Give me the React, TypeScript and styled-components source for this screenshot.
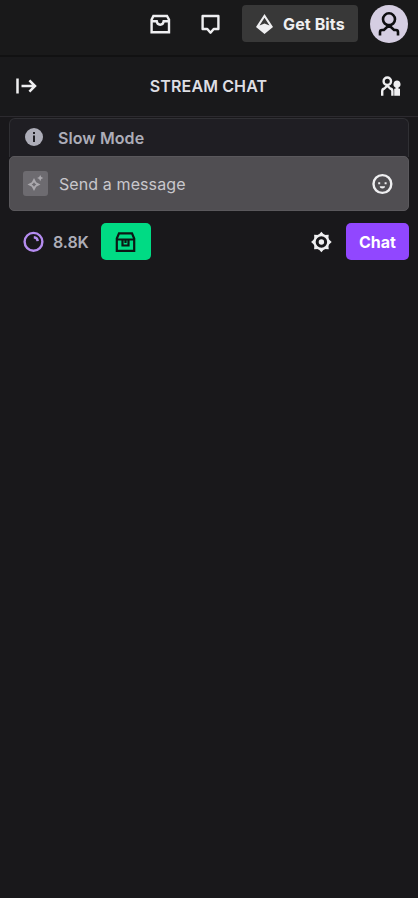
import React from "react";
import styled, { createGlobalStyle } from "styled-components";

const GlobalStyle = createGlobalStyle`
  * { box-sizing: border-box; }
  body { margin: 0; background: #19181b; }
  button { border: 0; padding: 0; margin: 0; font: inherit; color: inherit; background: none; cursor: pointer; }
  svg { display: block; flex: none; }
`;

const Page = styled.main`
  width: 100%;
  height: 898px;
  background: #19181b;
  color: #efeff1;
  font-family: Inter, "Liberation Sans", sans-serif;
  overflow: hidden;
`;

const TopBar = styled.header`
  display: flex;
  align-items: center;
  justify-content: flex-end;
  height: 57px;
  padding: 0 10px 8px 0;
  background: #19191a;
  border-bottom: 2px solid #111112;
`;

const IconButton = styled.button<{ $gap?: number }>`
  display: flex;
  align-items: center;
  justify-content: center;
  width: 22px;
  height: 22px;
  margin-right: ${(p) => p.$gap ?? 0}px;
`;

const BitsButton = styled.button`
  display: flex;
  align-items: center;
  gap: 9px;
  width: 116px;
  height: 37px;
  margin-right: 12px;
  padding-left: 13px;
  border-radius: 4px;
  background: #383838;
  font-size: 16px;
  font-weight: 700;
  letter-spacing: 0.12px;
  white-space: nowrap;
`;

const Avatar = styled.button`
  display: flex;
  width: 38px;
  height: 38px;
  border-radius: 50%;
  background: #d5cee2;
  color: #0e0e10;
`;

const ChatHeader = styled.header`
  display: flex;
  align-items: center;
  justify-content: space-between;
  height: 60px;
  padding: 0 16px 2px 15px;
  background: #19191b;
  border-bottom: 1px solid #2c2a2f;
`;

const Title = styled.h1`
  margin: 0;
  font-size: 16px;
  line-height: 20px;
  font-weight: 600;
  letter-spacing: 0.12px;
  color: #dedee3;
`;

const Composer = styled.section`
  height: 94px;
  margin: 0 9px;
  padding-top: 1px;
`;

const Notice = styled.div`
  display: flex;
  align-items: center;
  gap: 15px;
  height: 39px;
  padding: 0 0 2px 15px;
  border: 1px solid #303034;
  border-bottom: 0;
  border-radius: 6px 6px 0 0;
  background: #1f1e23;
`;

const NoticeLabel = styled.span`
  padding-top: 2px;
  color: #adadb8;
  font-size: 16px;
  font-weight: 600;
  letter-spacing: 0.08px;
`;

const MessageField = styled.div`
  display: flex;
  align-items: center;
  height: 55px;
  margin-top: -1px;
  padding: 0 15px 0 13px;
  border: 1px solid #5a585c;
  border-radius: 5px;
  background: #504e52;
  color: #c8c7cc;
  font-size: 16px;
  letter-spacing: 0.1px;
`;

const SparkleBadge = styled.span`
  display: flex;
  align-items: center;
  justify-content: center;
  width: 25px;
  height: 25px;
  margin-right: 11px;
  border-radius: 3px;
  background: #6d6b70;
  color: #aaa8ad;
`;

const Placeholder = styled.span`
  flex: 1;
`;

const EmoteButton = styled(IconButton)`
  color: #efeff1;
`;

const Footer = styled.footer`
  display: flex;
  align-items: center;
  height: 37px;
  margin: 12px 9px 0 23px;
`;

const Points = styled.span`
  width: 48px;
  margin-left: 9px;
  color: #adadb8;
  font-size: 16px;
  font-weight: 600;
  letter-spacing: -0.1px;
`;

const ClaimButton = styled.button`
  display: flex;
  align-items: center;
  justify-content: center;
  width: 50px;
  height: 37px;
  border-radius: 5px;
  background: #00db84;
  color: #0c1714;
`;

const Spacer = styled.div`
  flex: 1;
`;

const SendButton = styled.button`
  width: 63px;
  height: 37px;
  border-radius: 5px;
  background: #9147ff;
  color: #fff;
  font-size: 16px;
  font-weight: 700;
`;

const line = { fill: "none", stroke: "currentColor", strokeWidth: 2.4 } as const;

const InboxIcon = () => (
  <svg width="22" height="22" viewBox="0 0 22 22" {...line}>
    <path d="M2.600 6.600 4.400 3h13.600l2 3.600v12.600H2.600ZM2.600 8.200h5.100c.2 2.100 1.700 3.500 3.500 3.500s3.300-1.400 3.500-3.500h5.100" />
  </svg>
);

const WhisperIcon = () => (
  <svg width="22" height="22" viewBox="0 0 22 22" {...line}>
    <path strokeLinejoin="round" d="M3.600 3h15.800v13h-4.700L11.500 19.700 8.300 16H3.600Z" />
  </svg>
);

const BitsIcon = () => (
  <svg width="19" height="22" viewBox="0 0 19 22" fill="currentColor">
    <path fillRule="evenodd" d="M9.500 1 18 14l-8.500 7L1 14ZM9.500 4.800 4.500 12.600 9.500 10.400l5 2.200Z" />
  </svg>
);

const PersonIcon = () => (
  <svg width="38" height="38" viewBox="0 0 38 38" fill="none" stroke="currentColor" strokeWidth="2.600">
    <circle cx="19" cy="14.300" r="6" />
    <path d="M10 30.500v-3.400q0-2.100 2.100-2.100h1.800L19 20.300l5.100 4.700h1.800q2.100 0 2.100 2.100v3.400" />
  </svg>
);

const CollapseIcon = () => (
  <svg width="22" height="22" viewBox="0 0 22 22" fill="none" stroke="currentColor" strokeWidth="2.500">
    <path d="M2.500 3.500v15M6.500 11H20M14.400 5.400 20 11l-5.600 5.600" />
  </svg>
);

const CommunityIcon = () => (
  <svg width="22" height="22" viewBox="0 0 22 22" fill="none" stroke="currentColor" strokeWidth="2.400">
    <circle cx="7.300" cy="6.200" r="3.700" />
    <path d="M2.200 20.800v-4.600q0-2.200 2.200-2.700l2.900-2.900 2.900 2.900q2.200.5 2.200 2.700v4.600" />
    <path fill="currentColor" stroke="none" d="M17 5.500a3.700 3.700 0 0 1 1.500 7v1.300H20v7h-5.800v-7h1.300v-1.300a3.700 3.700 0 0 1 1.500-7Z" />
  </svg>
);

const InfoIcon = () => (
  <svg width="18" height="18" viewBox="0 0 18 18">
    <circle cx="9" cy="9" r="9" fill="#adadb8" />
    <path fill="#1f1e23" d="M8 4h2v2H8zM8 7.600h2V14H8z" />
  </svg>
);

const SparkleIcon = () => (
  <svg width="19" height="19" viewBox="0 0 19 19" fill="currentColor">
    <path fillRule="evenodd" d="m8 4 2.200 4.300 4.300 2.200-4.300 2.200L8 17l-2.200-4.300-4.300-2.200 4.300-2.200ZM8 8.200l-.9 1.400-1.400.9 1.400.9.9 1.400.9-1.400 1.400-.9-1.400-.9Z" />
    <path d="m14.200 1 1 2.100 2.100 1-2.100 1-1 2.100-1-2.100-2.100-1 2.100-1Z" />
  </svg>
);

const SmileIcon = () => (
  <svg width="22" height="22" viewBox="0 0 22 22" {...line}>
    <circle cx="11.400" cy="11" r="8.900" />
    <path fill="currentColor" stroke="none" d="M7.200 9.200h2v2h-2zM13.600 9.200h2v2h-2zM8.700 13.300h5.400c-.2 1.500-1.200 2.200-2.700 2.200s-2.500-.7-2.700-2.200Z" />
  </svg>
);

const PointsIcon = () => (
  <svg width="21" height="21" viewBox="0 0 21 21" fill="none" stroke="#b58cf0" strokeWidth="2.400">
    <circle cx="10.500" cy="10.800" r="8.900" />
    <path d="M10.800 6.200q3.700.2 3.900 3.900" />
  </svg>
);

const ChestIcon = () => (
  <svg width="22" height="22" viewBox="0 0 22 22" fill="none" stroke="currentColor" strokeWidth="2.200">
    <path d="M1.800 19.900V7.500L4 2.300h13l2.200 5.200v12.400ZM1.800 8.500h17.400M7.500 8.500v6h6v-6M10.500 8.500V12" />
  </svg>
);

const spokes = [0, 45, 90, 135, 180, 225, 270, 315];

const GearIcon = () => (
  <svg width="22" height="22" viewBox="0 0 22 22" fill="currentColor">
    <g transform="translate(.4 0)">
      {spokes.map((angle) => (
        <path key={angle} d="m8.100 4 2.900-3.300L13.900 4Z" transform={`rotate(${angle} 11 11)`} />
      ))}
      <circle cx="11" cy="11" r="6.900" fill="none" stroke="currentColor" strokeWidth="2.300" />
      <circle cx="11" cy="11" r="2.700" />
    </g>
  </svg>
);

export default function App() {
  return (
    <>
      <GlobalStyle />
      <Page>
        <TopBar>
          <IconButton $gap={28} aria-label="Inbox"><InboxIcon /></IconButton>
          <IconButton $gap={21} aria-label="Whispers"><WhisperIcon /></IconButton>
          <BitsButton><BitsIcon />Get Bits</BitsButton>
          <Avatar aria-label="Account"><PersonIcon /></Avatar>
        </TopBar>
        <ChatHeader>
          <IconButton aria-label="Collapse"><CollapseIcon /></IconButton>
          <Title>STREAM CHAT</Title>
          <IconButton aria-label="Community"><CommunityIcon /></IconButton>
        </ChatHeader>
        <Composer>
          <Notice><InfoIcon /><NoticeLabel>Slow Mode</NoticeLabel></Notice>
          <MessageField>
            <SparkleBadge><SparkleIcon /></SparkleBadge>
            <Placeholder>Send a message</Placeholder>
            <EmoteButton aria-label="Emotes"><SmileIcon /></EmoteButton>
          </MessageField>
        </Composer>
        <Footer>
          <PointsIcon />
          <Points>8.8K</Points>
          <ClaimButton aria-label="Claim bonus"><ChestIcon /></ClaimButton>
          <Spacer />
          <IconButton $gap={14} aria-label="Chat settings"><GearIcon /></IconButton>
          <SendButton>Chat</SendButton>
        </Footer>
      </Page>
    </>
  );
}
